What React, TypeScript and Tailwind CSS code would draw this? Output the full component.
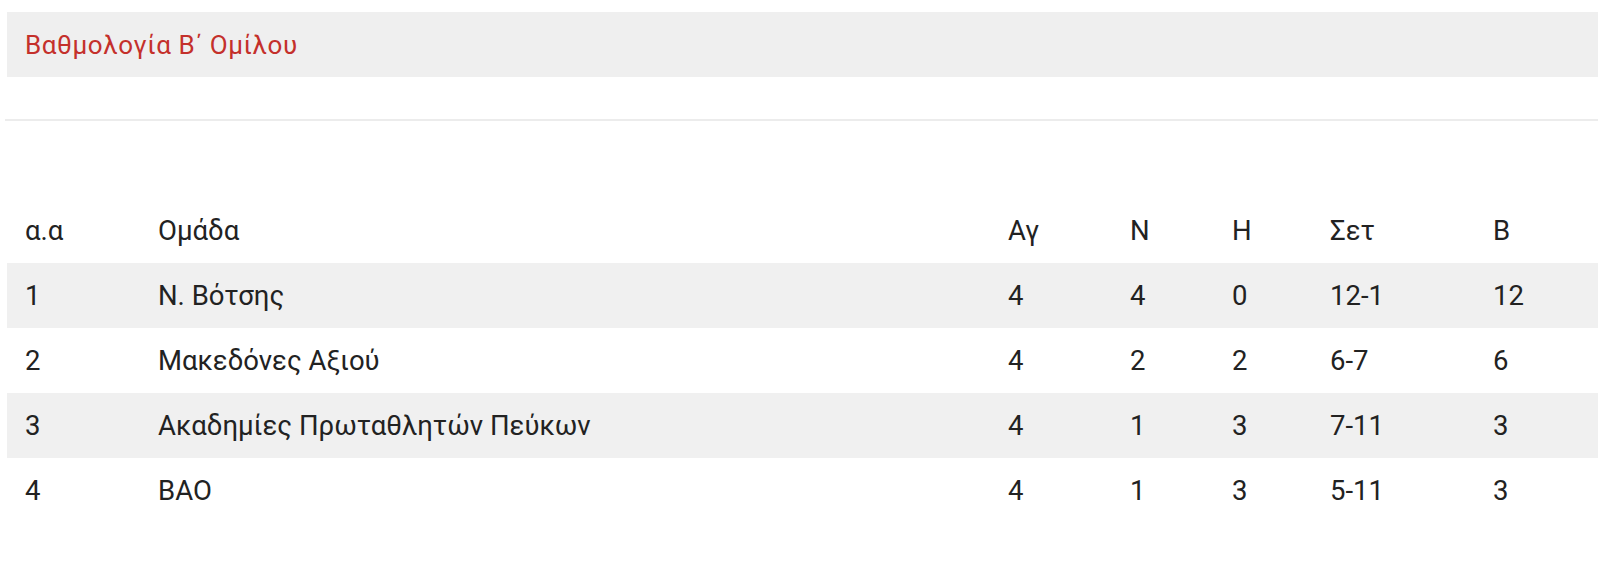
import React from "react";

const rows = [
  ["1", "Ν. Βότσης", "4", "4", "0", "12-1", "12"],
  ["2", "Μακεδόνες Αξιού", "4", "2", "2", "6-7", "6"],
  ["3", "Ακαδημίες Πρωταθλητών Πεύκων", "4", "1", "3", "7-11", "3"],
  ["4", "ΒΑΟ", "4", "1", "3", "5-11", "3"],
];

const head = ["α.α", "Ομάδα", "Αγ", "Ν", "Η", "Σετ", "Β"];

const gridCols = "grid grid-cols-[133px_850px_122px_102px_98px_163px_123px]";

export default function App() {
  return (
    <div
      className="w-[1600px] h-[564px] bg-white text-[#222]"
      style={{ fontFamily: "Roboto, 'Noto Sans', sans-serif" }}
    >
      <div className="pt-[12px] pl-[7px] pr-[2px]">
        <div className="h-[65px] bg-[#efefef] flex items-center pl-[18px]">
          <h2 className="text-[26px] tracking-[0.6px] text-[#c4302b] leading-none">
            Βαθμολογία Β΄ Ομίλου
          </h2>
        </div>
      </div>
      <div className="ml-[5px] mr-[2px] mt-[42px] h-[2px] bg-[#ececec]" />
      <div className="ml-[7px] mr-[2px] mt-[77px]">
        <div className={`${gridCols} h-[65px] items-center text-[27.5px]`}>
          {head.map((h, i) => (
            <div key={i} className="pl-[18px]">
              {h}
            </div>
          ))}
        </div>
        {rows.map((r, ri) => (
          <div
            key={ri}
            className={`${gridCols} h-[65px] items-center text-[27.5px] ${ri % 2 === 0 ? "bg-[#f0f0f0]" : "bg-white"}`}
          >
            {r.map((c, ci) => (
              <div key={ci} className="pl-[18px]">
                {c}
              </div>
            ))}
          </div>
        ))}
      </div>
    </div>
  );
}
